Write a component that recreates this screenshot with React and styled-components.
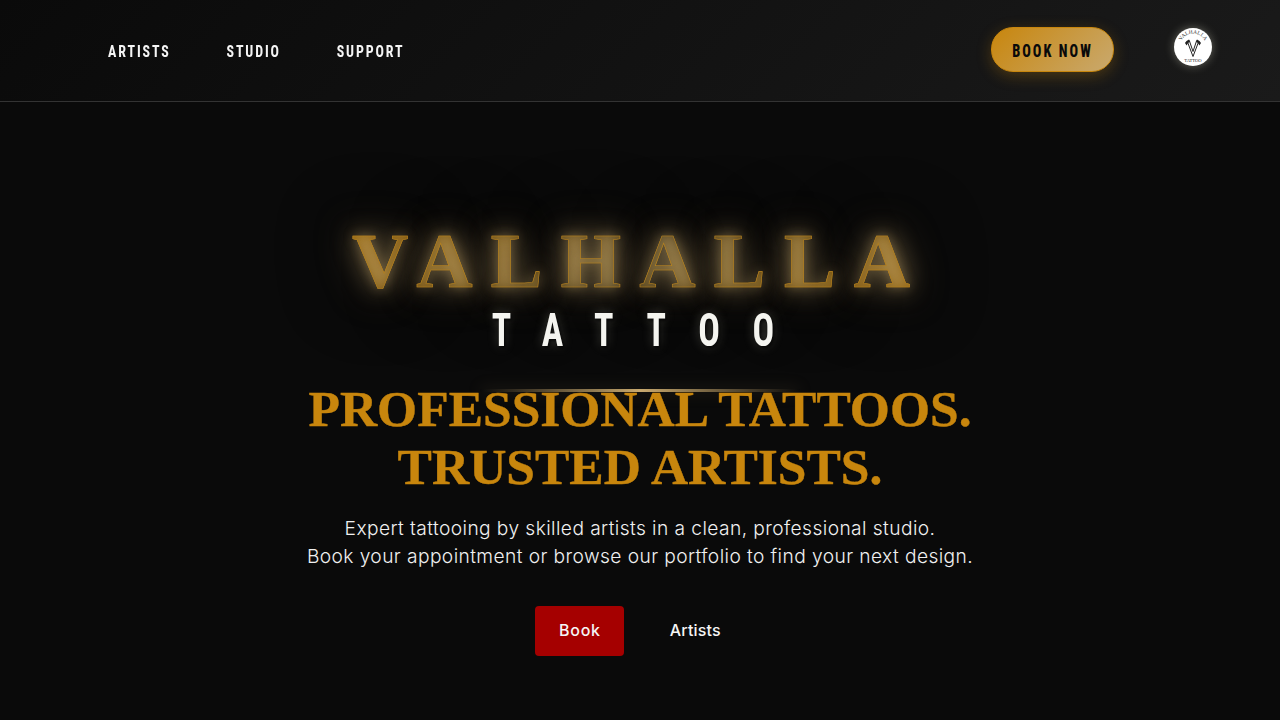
import React from "react";
import styled, { createGlobalStyle } from "styled-components";

const Global = createGlobalStyle`
  html, body { margin: 0; padding: 0; background: #0a0a0a; }
  * { box-sizing: border-box; }
`;

const Page = styled.div`
  width: 1280px;
  height: 720px;
  overflow: hidden;
  background: #0a0a0a;
  font-family: Inter, "Liberation Sans", sans-serif;
`;

const Header = styled.header`
  height: 102px;
  border-bottom: 1px solid #333;
  background: linear-gradient(135deg, #0a0a0a 0%, #1a1a1a 100%);
  padding: 0 68px 0 108px;
  display: flex;
  align-items: center;
  justify-content: space-between;
`;

const Nav = styled.nav`
  display: flex;
  gap: 68px;
  align-items: center;
  transform: scaleX(0.82);
  transform-origin: left center;
`;

const NavLink = styled.a`
  display: block;
  font-family: Roboto, "Liberation Sans", sans-serif;
  font-stretch: 75%;
  font-weight: 700;
  font-size: 17px;
  line-height: 20px;
  letter-spacing: 2.3px;
  color: #f5f5f5;
`;

const HeaderRight = styled.div`
  display: flex;
  align-items: center;
  gap: 60px;
`;

const BookNow = styled.button`
  width: 123px;
  height: 45px;
  margin-top: -3px;
  border: 1px solid #c8860d;
  border-radius: 22px;
  background: linear-gradient(135deg, #c8860d 0%, #c9a96e 100%);
  box-shadow: 0 4px 15px rgba(200, 134, 13, 0.3);
  padding: 0;
  overflow: hidden;
  white-space: nowrap;
`;

const BookNowLabel = styled.span`
  display: block;
  color: #0a0a0a;
  font-family: Roboto, "Liberation Sans", sans-serif;
  font-stretch: 75%;
  font-weight: 800;
  font-size: 18px;
  letter-spacing: 2.6px;
  transform: translateY(1px) scaleX(0.79);
`;

const LogoSvg = styled.svg`
  display: block;
  width: 38px;
  height: 38px;
  margin-top: -8px;
  border-radius: 50%;
  background: #fff;
  box-shadow: 0 0 10px rgba(245, 245, 220, 0.35);
`;

const Hero = styled.main`
  display: flex;
  flex-direction: column;
  align-items: center;
  padding-top: 114px;
  text-align: center;
`;

const Wordmark = styled.h1`
  margin: 0;
  font-family: "Liberation Serif", serif;
  font-weight: 700;
  font-size: 78px;
  line-height: 90px;
  letter-spacing: 18px;
  color: transparent;
  background: linear-gradient(135deg, #a06a08 0%, #4f3f1c 50%, #a06a08 100%);
  -webkit-background-clip: text;
  background-clip: text;
  -webkit-text-stroke: 0.6px #b8821c;
  text-shadow:
    0 0 12px rgba(201, 169, 110, 0.4),
    0 0 24px rgba(201, 169, 110, 0.5),
    0 0 40px rgba(201, 169, 110, 0.55),
    0 0 80px rgba(0, 0, 0, 0.9);
`;

const Subword = styled.div`
  margin-top: -1px;
  font-family: Roboto, "Liberation Sans", sans-serif;
  font-stretch: 75%;
  font-weight: 700;
  font-size: 46px;
  line-height: 50px;
  letter-spacing: 42px;
  padding-left: 25px;
  color: #f5f5f0;
  white-space: nowrap;
  transform: scaleX(0.78);
  text-shadow: 2px 2px 4px rgba(0, 0, 0, 0.8), 0 0 12px rgba(245, 245, 220, 0.25);
`;

const Divider = styled.div`
  width: 320px;
  height: 3px;
  margin-top: 34px;
  background: linear-gradient(90deg, transparent, #c9a96e, transparent);
  box-shadow: 0 0 15px rgba(201, 169, 110, 0.25);
`;

const Headline = styled.h2`
  margin: -12px 0 0;
  font-family: "Liberation Serif", serif;
  font-weight: 700;
  font-size: 51.5px;
  line-height: 58px;
  color: #c8860d;
  -webkit-text-stroke: 0.4px #c8860d;
  position: relative;
`;

const Copy = styled.p`
  margin: 18px 0 0;
  font-size: 19.2px;
  line-height: 28px;
  letter-spacing: 0.41px;
  font-weight: 300;
  color: #f0f0f0;
`;

const Actions = styled.div`
  display: flex;
  align-items: center;
  gap: 22px;
  margin-top: 36px;
`;

const ActionLink = styled.a`
  display: block;
  height: 50px;
  padding: ${p => (p.$primary ? "0 23px 0 24px" : "0 24px")};
  border-radius: 4px;
  font-size: 16px;
  font-weight: 500;
  line-height: 48px;
  letter-spacing: ${p => (p.$primary ? "0.7px" : "0.2px")};
  color: #f5f5f5;
  background: ${p => (p.$primary ? "#a50000" : "transparent")};
`;

const Logo = () => (
  <LogoSvg viewBox="0 0 38 38" aria-label="Valhalla Tattoo">
    <defs>
      <path id="arcTop" d="M6.5 15 A13 13 0 0 1 31.5 15" fill="none" />
    </defs>
    <text fontFamily="Liberation Serif, serif" fontSize="5.4" fill="#333" textAnchor="middle">
      <textPath href="#arcTop" startOffset="50%">VALHALLA</textPath>
    </text>
    <path d="M13.5 14 L19 28.5 L24.5 14 M15.8 14 L19 23.5 L22.2 14" fill="none" stroke="#222" strokeWidth="1" strokeLinejoin="round" />
    <path d="M11 15 Q12 12.6 15 11.5 L16.4 13.6 Q13.6 14.4 12.6 17.6 Z M27 15 Q26 12.6 23 11.5 L21.6 13.6 Q24.4 14.4 25.4 17.6 Z" fill="#222" />
    <text x="19" y="33.5" fontFamily="Liberation Serif, serif" fontSize="4.6" fill="#222" textAnchor="middle">TATTOO</text>
  </LogoSvg>
);

export default function App() {
  return (
    <Page>
      <Global />
      <Header>
        <Nav>
          <NavLink>ARTISTS</NavLink>
          <NavLink>STUDIO</NavLink>
          <NavLink>SUPPORT</NavLink>
        </Nav>
        <HeaderRight>
          <BookNow><BookNowLabel>BOOK NOW</BookNowLabel></BookNow>
          <Logo />
        </HeaderRight>
      </Header>
      <Hero>
        <Wordmark>VALHALLA</Wordmark>
        <Subword>TATTOO</Subword>
        <Divider />
        <Headline>PROFESSIONAL TATTOOS.<br />TRUSTED ARTISTS.</Headline>
        <Copy>Expert tattooing by skilled artists in a clean, professional studio.<br />Book your appointment or browse our portfolio to find your next design.</Copy>
        <Actions>
          <ActionLink $primary>Book</ActionLink>
          <ActionLink>Artists</ActionLink>
        </Actions>
      </Hero>
    </Page>
  );
}
